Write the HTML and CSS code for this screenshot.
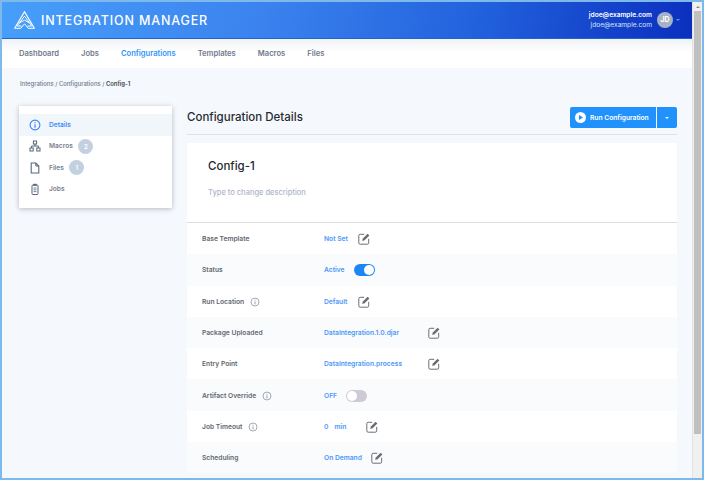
FILE: index.html
```html
<!DOCTYPE html>
<html lang="en">
<head>
<meta charset="utf-8">
<title>Integration Manager</title>
<link rel="stylesheet" href="styles.css">
</head>
<body>
<svg class="defs" width="0" height="0" aria-hidden="true">
  <symbol id="edit" viewBox="0 0 12 12">
    <path d="M6.200 1.300H2.200A1.400 1.400 0 0 0 .8 2.700v7.100a1.400 1.400 0 0 0 1.400 1.400H9.300a1.400 1.400 0 0 0 1.400-1.400V5.800" fill="none" stroke="currentColor" stroke-width="1"/>
    <path d="M4.200 7.900 4.800 5.500 9.600 .7l1.800 1.800L6.600 7.300z" fill="currentColor"/>
  </symbol>
  <symbol id="info" viewBox="0 0 10 10">
    <circle cx="5" cy="5" r="4" fill="none" stroke="currentColor" stroke-width=".8"/>
    <path d="M5 4.400v3M5 2.600v.9" stroke="currentColor" stroke-width=".9"/>
  </symbol>
</svg>
<div class="frame">
  <div class="page">
    <header class="topbar">
      <div class="brand">
        <svg class="logo" width="21" height="18" viewBox="0 0 21 18">
          <path d="M.5 17.500 10.500 .8 20.500 17.500" fill="none" stroke="#fff" stroke-width="1.200"/>
          <path d="M3.500 14.500 10.500 5.200 17.500 14.500M5.500 11.900 10.500 9.200 15.500 11.900M.8 17.300H6.800M14.200 17.300H20.200M3.200 15H7.500M13.500 15H17.800M10.500 12.800 7 17M10.500 12.800 14 17" fill="none" stroke="#fff" stroke-width="1"/>
        </svg>
        <span class="brand-name">INTEGRATION MANAGER</span>
      </div>
      <div class="user">
        <div class="user-text">
          <span class="user-main">jdoe@example.com</span>
          <span class="user-sub">jdoe@example.com</span>
        </div>
        <span class="avatar">JD</span>
        <span class="user-caret"></span>
      </div>
    </header>
    <nav class="tabs">
      <a>Dashboard</a>
      <a>Jobs</a>
      <a class="active">Configurations</a>
      <a>Templates</a>
      <a>Macros</a>
      <a>Files</a>
    </nav>
    <main class="content">
      <div class="crumbs">Integrations / Configurations / <b>Config-1</b></div>
      <div class="columns">
        <aside class="side">
          <div class="side-item current">
            <svg class="side-icon" width="12" height="12" viewBox="0 0 12 12"><circle cx="6" cy="6" r="4.900" fill="none" stroke="currentColor" stroke-width="1.100"/><path d="M6 5.200v3.500M6 3.200v1.100" stroke="currentColor" stroke-width="1.200"/></svg>
            <span>Details</span>
          </div>
          <div class="side-item">
            <svg class="side-icon" width="12" height="12" viewBox="0 0 12 12"><g fill="none" stroke="currentColor" stroke-width="1"><rect x="4.400" y="1" width="3.200" height="3"/><rect x="1" y="8" width="3.200" height="3"/><rect x="7.800" y="8" width="3.200" height="3"/><path d="M6 4v2H2.600v2M6 6h3.400v2"/></g></svg>
            <span>Macros</span><span class="count">2</span>
          </div>
          <div class="side-item">
            <svg class="side-icon" width="12" height="12" viewBox="0 0 12 12"><path d="M2.200 1h4.600l3 3v7h-7.600z" fill="none" stroke="currentColor" stroke-width="1.100"/><path d="M6.800 1v3h3" fill="none" stroke="currentColor" stroke-width="1"/></svg>
            <span>Files</span><span class="count">1</span>
          </div>
          <div class="side-item">
            <svg class="side-icon" width="12" height="12" viewBox="0 0 12 12"><rect x="3" y="2" width="6" height="9.500" rx=".8" fill="none" stroke="currentColor" stroke-width="1"/><rect x="4.300" y=".8" width="3.400" height="2" fill="currentColor"/><path d="M4.500 5h3M4.500 6.800h3M4.500 8.600h3" stroke="currentColor" stroke-width=".8"/></svg>
            <span>Jobs</span>
          </div>
        </aside>
        <section class="detail">
          <div class="detail-head">
            <h1>Configuration Details</h1>
            <div class="run">
              <button class="run-main">
                <svg width="11" height="11" viewBox="0 0 11 11"><circle cx="5.500" cy="5.500" r="5.500" fill="#fff"/><path d="M4 2.900 8 5.500 4 8.100z" fill="#2191fb"/></svg>
                <span class="run-label">Run Configuration</span>
              </button>
              <button class="run-more"><span class="more-caret"></span></button>
            </div>
          </div>
          <div class="card">
            <div class="card-top">
              <h2>Config-1</h2>
              <p>Type to change description</p>
            </div>
            <div class="row"><span class="label">Base Template</span><span class="value">Not Set</span><svg class="edit" width="12" height="12"><use href="#edit"/></svg></div>
            <div class="row"><span class="label">Status</span><span class="value">Active</span><span class="toggle on"></span></div>
            <div class="row"><span class="label">Run Location<svg class="tip" width="10" height="10"><use href="#info"/></svg></span><span class="value">Default</span><svg class="edit" width="12" height="12"><use href="#edit"/></svg></div>
            <div class="row"><span class="label">Package Uploaded</span><span class="value wide-a">DataIntegration.1.0.djar</span><svg class="edit" width="12" height="12"><use href="#edit"/></svg></div>
            <div class="row"><span class="label">Entry Point</span><span class="value wide-a">DataIntegration.process</span><svg class="edit" width="12" height="12"><use href="#edit"/></svg></div>
            <div class="row"><span class="label">Artifact Override<svg class="tip" width="10" height="10"><use href="#info"/></svg></span><span class="value">OFF</span><span class="toggle"></span></div>
            <div class="row"><span class="label">Job Timeout<svg class="tip" width="10" height="10"><use href="#info"/></svg></span><span class="value timeout"><span>0</span><span>min</span></span><svg class="edit" width="12" height="12"><use href="#edit"/></svg></div>
            <div class="row"><span class="label">Scheduling</span><span class="value">On Demand</span><svg class="edit tight" width="12" height="12"><use href="#edit"/></svg></div>
          </div>
        </section>
      </div>
    </main>
  </div>
  <div class="scrollbar">
    <span class="arrow"></span>
    <span class="thumb"></span>
  </div>
</div>
</body>
</html>
```
FILE: styles.css
```css
* { box-sizing: border-box; }
html, body { margin: 0; height: 100%; overflow: hidden; }
body { font-family: Inter, "Liberation Sans", sans-serif; color: #2d3440; }
.defs { position: absolute; }

.frame {
  display: flex;
  width: 704px;
  height: 480px;
  border: 2px solid #7db9ea;
  overflow: hidden;
}
.page { flex: 1; min-width: 0; display: flex; flex-direction: column; background: #f5f8fc; }

.topbar {
  height: 37px;
  flex: none;
  display: flex;
  align-items: center;
  justify-content: space-between;
  padding: 0 12px;
  background: linear-gradient(100deg, #479ffa 0%, #3b82ee 38%, #2160dc 70%, #0b2fbe 100%);
  border-bottom: 1px solid #1f63d8;
}
.brand { display: flex; align-items: center; gap: 6px; }
.logo { display: block; }
.brand-name { font-size: 12.500px; font-weight: 500; letter-spacing: .85px; color: #fff; }
.user { display: flex; align-items: center; }
.user-text { display: flex; flex-direction: column; align-items: flex-end; gap: 1px; margin-top: 1px; font-size: 6.600px; line-height: 9px; color: #fff; }
.user-main { font-weight: 600; }
.user-sub { color: #d6e4fb; }
.avatar {
  width: 16px;
  height: 16px;
  margin-left: 5px;
  border-radius: 50%;
  background: #a7b2c6;
  color: #fff;
  font-size: 7px;
  font-weight: 700;
  line-height: 16px;
  text-align: center;
}
.user-caret { margin-left: 3px; border: 2px solid transparent; border-top-color: #5b93e8; border-bottom: 0; }

.tabs {
  height: 29px;
  flex: none;
  display: flex;
  align-items: center;
  gap: 22px;
  padding: 0 0 1px 17px;
  background: linear-gradient(#f1f2f4, #fff 45%);
  font-size: 7.600px;
  font-weight: 600;
  color: #6f7a8d;
}
.tabs .active { color: #2f95f8; }

.content { flex: 1; min-height: 0; padding: 0 15px 0 17px; overflow: hidden; }
.crumbs { margin-top: 11px; padding-left: 1px; font-size: 5.900px; line-height: 10px; color: #6f7a8d; font-weight: 500; }
.crumbs b { color: #3d4450; font-weight: 600; }

.columns { display: flex; align-items: flex-start; gap: 15px; margin-top: 17px; }
.side {
  width: 153px;
  flex: none;
  padding: 8px 0;
  background: #fff;
  border-radius: 1px;
  box-shadow: 0 1px 5px rgba(60, 70, 90, .35);
}
.side-item {
  height: 21.500px;
  display: flex;
  align-items: center;
  padding-left: 10px;
  font-size: 6.600px;
  font-weight: 600;
  color: #78818f;
}
.side-icon { margin-right: 8px; color: #59667f; }
.current { background: #f1f6fb; color: #3f8df5; }
.current .side-icon { color: #3f82f5; }
.count {
  width: 15px;
  height: 15px;
  margin-left: 5.500px;
  border-radius: 50%;
  background: #c3d0df;
  color: #fff;
  font-size: 6px;
  line-height: 15px;
  text-align: center;
}

.detail { flex: 1; min-width: 0; }
.detail-head {
  height: 29px;
  display: flex;
  align-items: flex-start;
  justify-content: space-between;
  border-bottom: 1px solid #e0e4ea;
}
.detail-head h1 { margin: 0; padding-top: 3px; font-size: 11.500px; line-height: 16px; font-weight: 500; color: #262b33; }
.run { display: flex; gap: 1px; margin-top: 1px; }
.run button {
  height: 21px;
  display: flex;
  align-items: center;
  border: 0;
  background: #2191fb;
  color: #fff;
  font-family: inherit;
  font-size: 6.700px;
  font-weight: 600;
}
.run-main { width: 86px; padding: 0 0 0 5px; gap: 4px; border-radius: 2px 0 0 2px; }
.run-label { padding-top: 1px; }
.run-more { width: 20px; justify-content: center; padding: 0; border-radius: 0 2px 2px 0; }
.more-caret { border: 2.500px solid transparent; border-top-color: #fff; border-bottom: 0; }

.card { margin-top: 8px; background: #fff; }
.card-top { height: 80px; padding: 16px 0 0 21px; border-bottom: 1px solid #d9dfe7; }
.card-top h2 { margin: 0; font-size: 11.500px; line-height: 14px; font-weight: 500; color: #23282f; }
.card-top p { margin: 15px 0 0; font-size: 7.500px; line-height: 10px; font-weight: 500; color: #adb6c8; }

.row {
  height: 31.300px;
  display: flex;
  align-items: center;
  padding: 1px 0 0 15px;
  font-size: 6.700px;
  font-weight: 600;
}
.row:nth-child(odd) { background: #fafbfd; }
.label { width: 122px; flex: none; display: flex; align-items: center; color: #62676f; }
.tip { margin-left: 6px; color: #8e97a3; }
.value { color: #4b97f8; }
.value.wide-a { width: 93px; }
.timeout { display: flex; gap: 6px; width: 31px; }
.edit { margin-left: 10.500px; color: #6a6e74; }
.edit.tight { margin-left: 9px; }
.toggle {
  position: relative;
  width: 21px;
  height: 12px;
  margin-left: 9px;
  border-radius: 6px;
  background: #cfcbd6;
}
.toggle::after {
  content: "";
  position: absolute;
  left: 1px;
  top: 1px;
  width: 10px;
  height: 10px;
  border-radius: 50%;
  background: #fff;
}
.toggle.on { background: #1c86f5; }
.toggle.on::after { left: 10px; }

.scrollbar {
  width: 10px;
  flex: none;
  padding: 1px 1px 0;
  background: #f0f0f0;
  border-left: 1px solid #e2e2e2;
  display: flex;
  flex-direction: column;
  align-items: stretch;
}
.arrow { height: 8px; flex: none; position: relative; }
.arrow::after { content: ""; position: absolute; left: 2px; top: 3px; border: 2px solid transparent; border-bottom-color: #8a8a8a; border-top: 0; }
.thumb { height: 423px; margin-top: 0; background: #bfbfbf; }
```
